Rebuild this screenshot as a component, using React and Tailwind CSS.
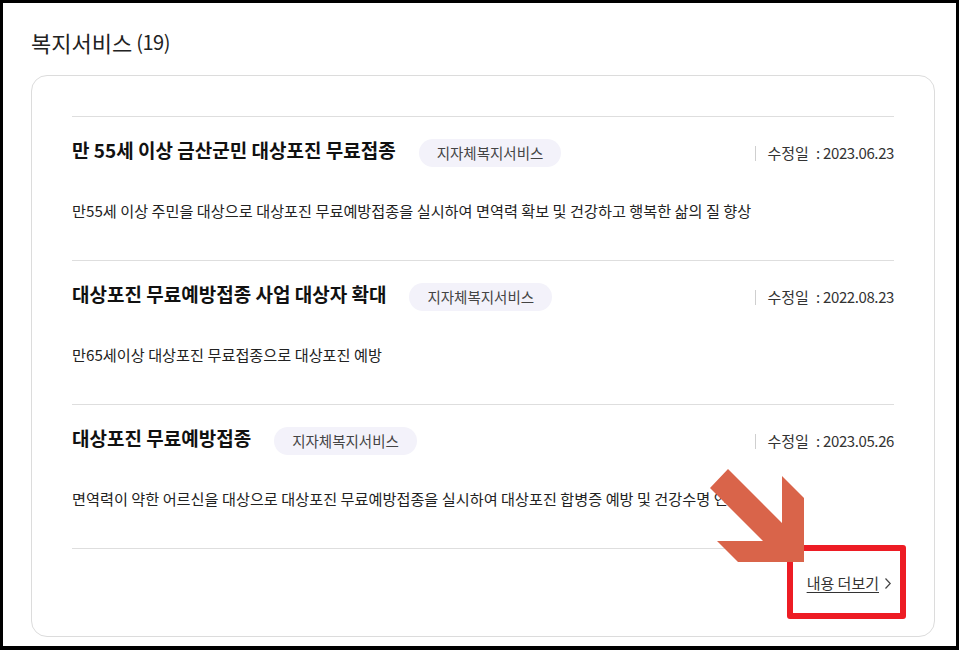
import React from "react";

const rows = [
  {
    title: "만 55세 이상 금산군민 대상포진 무료접종",
    date: "2023.06.23",
    desc: "만55세 이상 주민을 대상으로 대상포진 무료예방접종을 실시하여 면역력 확보 및 건강하고 행복한 삶의 질 향상",
  },
  {
    title: "대상포진 무료예방접종 사업 대상자 확대",
    date: "2022.08.23",
    desc: "만65세이상 대상포진 무료접종으로 대상포진 예방",
  },
  {
    title: "대상포진 무료예방접종",
    date: "2023.05.26",
    desc: "면역력이 약한 어르신을 대상으로 대상포진 무료예방접종을 실시하여 대상포진 합병증 예방 및 건강수명 연장",
  },
];

export default function App() {
  return (
    <div
      className="relative w-[959px] h-[650px] bg-white border-black border-l-[3px] border-t-[3px] border-r-[3px] border-b-[4px] overflow-hidden"
      style={{ fontFamily: '"Noto Sans CJK KR", "Noto Sans", sans-serif' }}
    >
      <div className="pl-[28px] pr-[21px] pt-[23px]">
        <h2 className="h-[32px] flex items-center text-[22px] text-[#222] font-normal">
          복지서비스<span className="ml-[4px] text-[20px] tracking-[-0.5px]">(19)</span>
        </h2>
        <div className="mt-[17px] h-[562px] border border-[#dcdcdc] rounded-[16px] px-[40px] pt-[40px]">
          {rows.map((r, i) => (
            <div key={i} className="border-t border-[#dedede] pt-[22px] pb-[38px]">
              <div className="h-[28px] flex items-center">
                <span className="text-[19px] font-bold text-[#111] -mt-[6px]">
                  {r.title}
                </span>
                <span className="ml-[23px] h-[28px] px-[18px] rounded-full bg-[#f3f2fa] text-[14.5px] text-[#444] flex items-center">
                  지자체복지서비스
                </span>
                <div className="ml-auto flex items-center text-[15px] text-[#333]">
                  <span className="w-px h-[15px] bg-[#cfcfcf] mr-[11px]"></span>
                  <span>수정일</span>
                  <span className="ml-[7px] mr-[3px]">:</span>
                  <span className="tracking-[-0.4px]">{r.date}</span>
                </div>
              </div>
              <p className="mt-[31px] h-[24px] leading-[24px] text-[15.2px] text-[#222]">
                {r.desc}
              </p>
            </div>
          ))}
          <div className="border-t border-[#dedede] pt-[24px] flex justify-end">
            <a className="h-[20px] flex items-center text-[15px] text-[#333] mr-[2px]">
              <span className="underline underline-offset-[3px]">내용 더보기</span>
              <svg width="8" height="13" viewBox="0 0 8 13" className="ml-[5px]">
                <path d="M1.5 1.5 L6.2 6.5 L1.5 11.5" fill="none" stroke="#444" strokeWidth="1.2" />
              </svg>
            </a>
          </div>
        </div>
      </div>

      <div className="absolute left-[784px] top-[542px] w-[119px] h-[74px] border-[6px] border-[#ed1c24] rounded-[3px]"></div>

      <svg className="absolute left-0 top-0" width="959" height="650" style={{ pointerEvents: "none" }}>
        <polygon
          transform="translate(-3,-3)"
          points="728,469 782,523 782,476 804,498 804,562 738,562 717,541 763,541 710,488"
          fill="#d9644a"
        />
      </svg>
    </div>
  );
}
